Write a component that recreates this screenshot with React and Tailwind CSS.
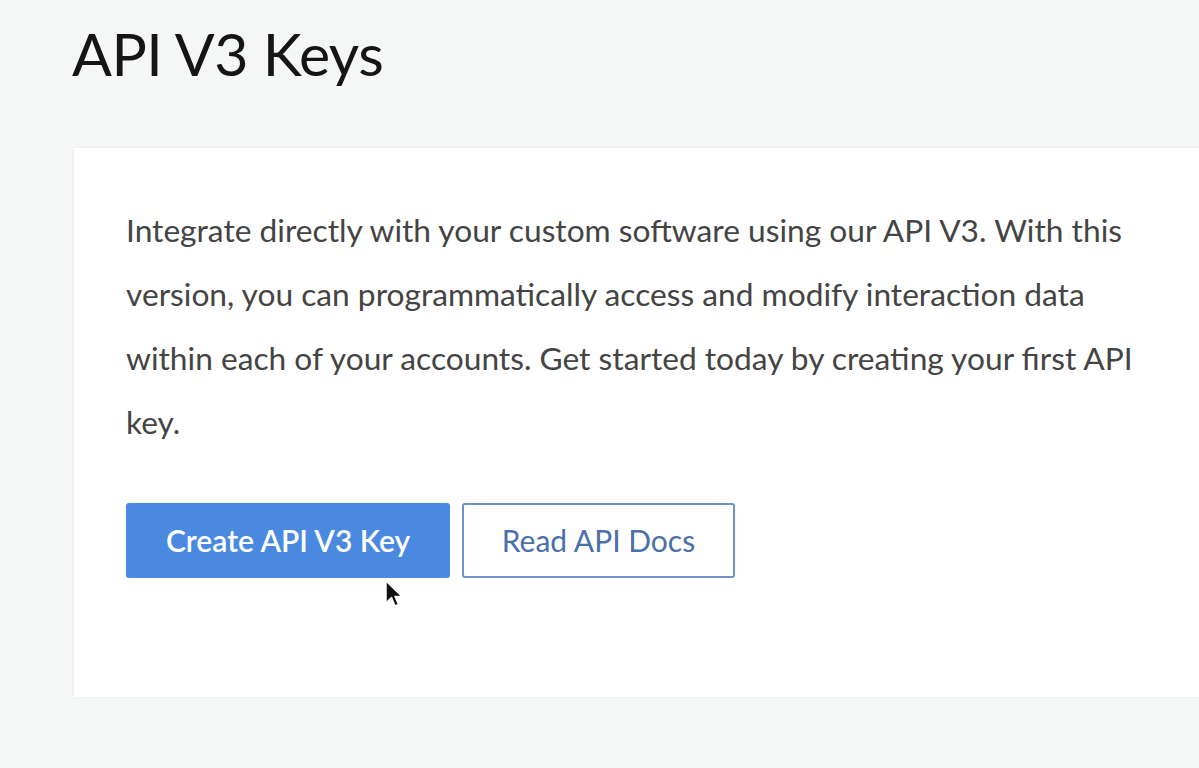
import React from 'react';

const Cursor = () => (
    <svg width="22" height="30" viewBox="0 0 22 30" className="absolute left-[258px] top-[76px]">
        <path d="M2 2 L2 24 L7.5 18.5 L11 27 L14.5 25.5 L11 17.5 L18 17.5 Z" fill="#111" stroke="#fff" strokeWidth="1.5" strokeLinejoin="round" />
    </svg>
);

export default function App() {
    return (
        <div className="min-h-[768px] w-full overflow-hidden bg-[#f5f6f6] font-['Lato','Open_Sans',sans-serif]">
            {/* Page heading */}
            <h1 className="pl-[72px] pt-[18px] text-[59px] leading-[72px] font-normal text-[#151515] tracking-[-0.5px]">
                API V3 Keys
            </h1>

            {/* Card */}
            <div className="ml-[74px] mt-[58px] w-[1200px] h-[549px] bg-white shadow-[0_0_3px_rgba(0,0,0,0.06)] pl-[52px] pt-[50px]">
                <p className="w-[1030px] text-[31.7px] leading-[64px] text-[#444]">
                    Integrate directly with your custom software using our API V3. With this version, you can programmatically access and modify interaction data within each of your accounts. Get started today by creating your first API key.
                </p>

                <div className="relative mt-[49px] flex gap-[12px]">
                    <button className="h-[75px] w-[324px] rounded-[3px] bg-[#4a89e0] text-[30px] font-semibold text-white">
                        Create API V3 Key
                    </button>
                    <button className="h-[75px] w-[273px] rounded-[3px] border-2 border-[#6f90c8] bg-white text-[30px] text-[#4a6fa9]">
                        Read API Docs
                    </button>
                    <Cursor />
                </div>
            </div>
        </div>
    );
}
